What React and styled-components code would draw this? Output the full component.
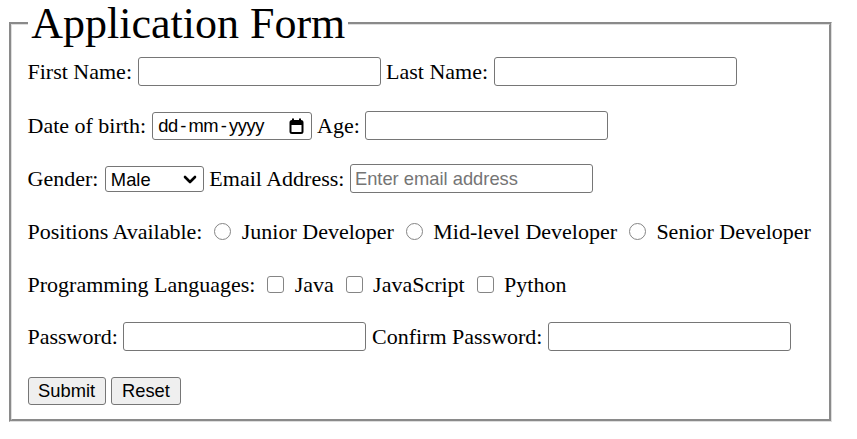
import React from 'react'
import styled, { createGlobalStyle } from 'styled-components'

const GlobalStyle = createGlobalStyle`
  body {
    margin: 0;
    background: #fff;
    color: #000;
    font-family: "Liberation Serif", "Times New Roman", serif;
    font-size: 22px;
  }
`

function CalendarIcon() {
  return (
    <svg width="15" height="16" viewBox="0 0 15 16">
      <rect x="3" y="0.5" width="2" height="3" fill="#000" />
      <rect x="10" y="0.5" width="2" height="3" fill="#000" />
      <rect x="1.5" y="3" width="12" height="12" rx="1.5" fill="none" stroke="#000" strokeWidth="2" />
      <rect x="1.5" y="3" width="12" height="4" fill="#000" />
    </svg>
  )
}

function Chevron() {
  return (
    <svg width="14" height="9" viewBox="0 0 14 9">
      <path d="M2 2 L7 7 L12 2" fill="none" stroke="#000" strokeWidth="2.6" strokeLinecap="round" strokeLinejoin="round" />
    </svg>
  )
}

function App() {
  return (
    <Page>
      <GlobalStyle />
      <FormBox>
        <Title>Application Form</Title>
        <Body>
          <Row>
            <Label>First Name:</Label>
            <TextInput type="text" />
            <Label>Last Name:</Label>
            <TextInput type="text" />
          </Row>

          <Row $mt={25}>
            <Label>Date of birth:</Label>
            <DateBox>
              <DateText>dd<Sep>-</Sep>mm<Sep>-</Sep>yyyy</DateText>
              <CalendarIcon />
            </DateBox>
            <Label>Age:</Label>
            <TextInput type="text" />
          </Row>

          <Row $mt={24}>
            <Label>Gender:</Label>
            <SelectWrap>
              <Select defaultValue="male">
                <option value="male">Male</option>
                <option value="female">Female</option>
                <option value="other">Other</option>
              </Select>
              <Arrow><Chevron /></Arrow>
            </SelectWrap>
            <Label>Email Address:</Label>
            <TextInput type="email" placeholder="Enter email address" />
          </Row>

          <Row $mt={24}>
            <Label>Positions Available:</Label>
            <Choice type="radio" name="position" />
            <Label>Junior Developer</Label>
            <Choice type="radio" name="position" />
            <Label>Mid-level Developer</Label>
            <Choice type="radio" name="position" />
            <Label>Senior Developer</Label>
          </Row>

          <Row $mt={24}>
            <Label>Programming Languages:</Label>
            <Choice type="checkbox" $square />
            <Label>Java</Label>
            <Choice type="checkbox" $square />
            <Label>JavaScript</Label>
            <Choice type="checkbox" $square />
            <Label>Python</Label>
          </Row>

          <Row $mt={23}>
            <Label>Password:</Label>
            <TextInput type="password" />
            <Label>Confirm Password:</Label>
            <TextInput type="password" />
          </Row>

          <Row $mt={25}>
            <Button type="submit" $px={9.6}>Submit</Button>
            <Button type="reset" $px={9.8}>Reset</Button>
          </Row>
        </Body>
      </FormBox>
    </Page>
  )
}

const Page = styled.div`
  padding-left: 9px;
`

const FormBox = styled.fieldset`
  box-sizing: border-box;
  width: 823px;
  min-width: 0;
  margin: 0;
  padding: 10px 16px 13.5px 15.5px;
  border: 3px groove #dedede;
`

const Title = styled.legend`
  font-size: 44px;
  line-height: 47px;
  padding: 0 2.75px 0 3.75px;
`

const Body = styled.div`
  display: flex;
  flex-direction: column;
`

const Row = styled.div`
  display: flex;
  align-items: center;
  gap: 5.5px;
  height: 29px;
  margin-top: ${({ $mt }) => $mt || 0}px;
`

const Label = styled.span`
  white-space: nowrap;
  line-height: normal;
`

const TextInput = styled.input`
  box-sizing: border-box;
  width: 243px;
  height: 29px;
  margin: 0;
  padding: 1px 4px;
  border: 1.4px solid #767676;
  border-radius: 3px;
  background: #fff;
  color: #000;
  font-family: "Liberation Sans", Arial, sans-serif;
  font-size: 18.33px;
  outline: none;

  &::placeholder {
    color: #757575;
  }
`

const DateBox = styled.div`
  box-sizing: border-box;
  width: 160px;
  height: 28px;
  display: flex;
  align-items: center;
  justify-content: space-between;
  padding: 0 7px 0 5.6px;
  border: 1.4px solid #767676;
  border-radius: 3px;
  background: #fff;
`

const DateText = styled.span`
  font-family: "Liberation Sans", Arial, sans-serif;
  font-size: 18.33px;
  letter-spacing: -0.4px;
  color: #000;
`

const Sep = styled.span`
  margin: 0 2.5px;
`

const SelectWrap = styled.div`
  position: relative;
  width: 99px;
  height: 26px;
  margin-left: 1px;
`

const Select = styled.select`
  appearance: none;
  box-sizing: border-box;
  width: 100%;
  height: 100%;
  margin: 0;
  padding: 0 0 0 5px;
  border: 1.4px solid #767676;
  border-radius: 3px;
  background: #fff;
  color: #000;
  font-family: "Liberation Sans", Arial, sans-serif;
  font-size: 18.33px;
  outline: none;
`

const Arrow = styled.span`
  position: absolute;
  right: 7px;
  top: 9px;
  display: flex;
  pointer-events: none;
`

const Choice = styled.input`
  appearance: none;
  box-sizing: border-box;
  flex: none;
  width: 17px;
  height: 17px;
  margin: 0 4.8px 0 6.5px;
  border: 1.4px solid #858585;
  border-radius: ${({ $square }) => ($square ? '3px' : '50%')};
  background: #fff;
`

const Button = styled.button`
  box-sizing: border-box;
  height: 28px;
  margin: 0;
  padding: 0 ${({ $px }) => $px}px;
  border: 1.4px solid #767676;
  border-radius: 3px;
  background: #efefef;
  color: #000;
  font-family: "Liberation Sans", Arial, sans-serif;
  font-size: 18.33px;
`

export default App
